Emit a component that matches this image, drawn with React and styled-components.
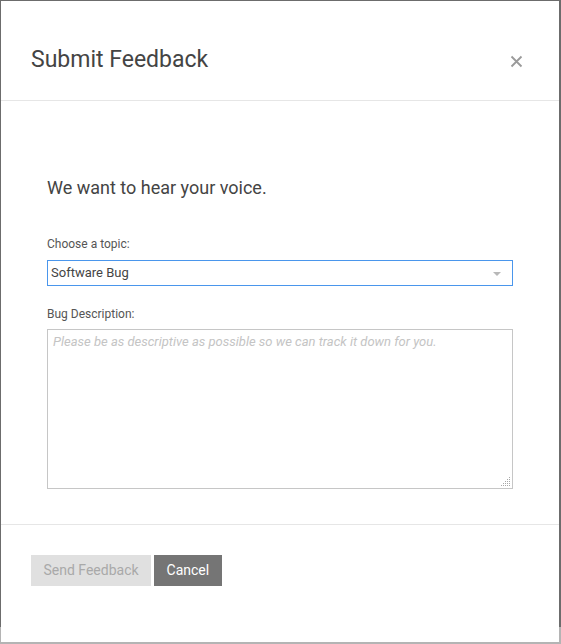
import React from "react";
import styled, { createGlobalStyle } from "styled-components";

const GlobalStyle = createGlobalStyle`
  html, body {
    margin: 0;
    padding: 0;
  }
  body {
    width: 561px;
    height: 644px;
    overflow: hidden;
    background: linear-gradient(#6c6c6c 0, #6c6c6c 627px, #b4b4b4 627px, #b4b4b4 100%);
    font-family: Roboto, "Liberation Sans", Arial, sans-serif;
  }
  * { box-sizing: border-box; }
`;

const Page = styled.div`
  padding: 1px 0 0 1px;
`;

const Modal = styled.div`
  width: 558px;
  height: 641px;
  background: #ffffff;
  display: flex;
  flex-direction: column;
`;

const Header = styled.div`
  height: 100px;
  border-bottom: 1px solid #e6e6e6;
  display: flex;
  justify-content: space-between;
  align-items: flex-start;
  padding: 45px 36px 0 30px;
`;

const Title = styled.h1`
  margin: 0;
  font-size: 23px;
  line-height: 28px;
  font-weight: 400;
  color: #444444;
`;

const CloseButton = styled.button`
  margin-top: 9px;
  padding: 0;
  border: 0;
  background: none;
  width: 13px;
  height: 13px;
  display: flex;
  cursor: pointer;
`;

const Body = styled.div`
  padding: 76px 46px 35px 46px;
  display: flex;
  flex-direction: column;
`;

const Heading = styled.h2`
  margin: 0 0 39px;
  font-size: 18px;
  line-height: 21px;
  font-weight: 400;
  color: #444444;
`;

const Label = styled.label`
  display: block;
  font-size: 12px;
  line-height: 14px;
  color: #555555;
  margin: ${(p) => (p.$spaced ? "21px" : "0")} 0 ${(p) => p.$after}px;
`;

const SelectBox = styled.div`
  height: 26px;
  border: 1px solid #4a96ec;
  display: flex;
  align-items: flex-start;
  justify-content: space-between;
  padding: 4px 11px 0 3px;
  font-size: 13px;
  line-height: 15px;
  color: #444444;
  background: #fff;
`;

const Caret = styled.span`
  margin-top: 7px;
  width: 0;
  height: 0;
  border-left: 4px solid transparent;
  border-right: 4px solid transparent;
  border-top: 4px solid #b8b8b8;
`;

const AreaWrap = styled.div`
  position: relative;
  width: 466px;
  height: 160px;
`;

const TextArea = styled.textarea`
  display: block;
  width: 466px;
  height: 160px;
  margin: 0;
  border: 1px solid #c6c6c6;
  border-radius: 0;
  padding: 4px 5px;
  font-family: Roboto, "Liberation Sans", Arial, sans-serif;
  font-size: 13px;
  line-height: 15px;
  color: #444;
  outline: none;
  resize: none;
  &::placeholder {
    color: #c4c4c4;
    font-style: italic;
  }
`;

const Grip = styled.svg`
  position: absolute;
  right: 2px;
  bottom: 2px;
  pointer-events: none;
`;

const Footer = styled.div`
  border-top: 1px solid #e6e6e6;
  padding: 30px 30px 0;
  display: flex;
  gap: 3px;
`;

const Button = styled.button`
  height: 31px;
  padding: 0 12.5px 1px;
  border: 0;
  border-radius: 0;
  font-family: Roboto, "Liberation Sans", Arial, sans-serif;
  font-size: 14px;
  background: ${(p) => (p.$primary ? "#e0e0e0" : "#757575")};
  color: ${(p) => (p.$primary ? "#a9a9a9" : "#ffffff")};
  cursor: pointer;
`;

const gripDots = [
  [9, 1], [9, 3], [7, 3], [9, 5], [7, 5], [5, 5], [9, 7], [7, 7], [5, 7], [3, 7], [9, 9], [7, 9], [5, 9], [3, 9], [1, 9],
];

export default function App() {
  return (
    <>
      <GlobalStyle />
      <Page>
        <Modal>
          <Header>
            <Title>Submit Feedback</Title>
            <CloseButton aria-label="Close">
              <svg width="13" height="13" viewBox="0 0 13 13">
                <path d="M1.5 1.5 L11.5 11.5 M11.5 1.5 L1.5 11.5" stroke="#9a9a9a" strokeWidth="1.8" />
              </svg>
            </CloseButton>
          </Header>
          <Body>
            <Heading>We want to hear your voice.</Heading>
            <Label $after={9}>Choose a topic:</Label>
            <SelectBox>
              <span>Software Bug</span>
              <Caret />
            </SelectBox>
            <Label $spaced $after={8}>Bug Description:</Label>
            <AreaWrap>
              <TextArea placeholder="Please be as descriptive as possible so we can track it down for you." />
              <Grip width="11" height="11" viewBox="0 0 11 11">
                {gripDots.map(([x, y]) => (
                  <rect key={`${x}-${y}`} x={x} y={y} width="1" height="1" fill="#a8a8a8" />
                ))}
              </Grip>
            </AreaWrap>
          </Body>
          <Footer>
            <Button $primary disabled>Send Feedback</Button>
            <Button>Cancel</Button>
          </Footer>
        </Modal>
      </Page>
    </>
  );
}
